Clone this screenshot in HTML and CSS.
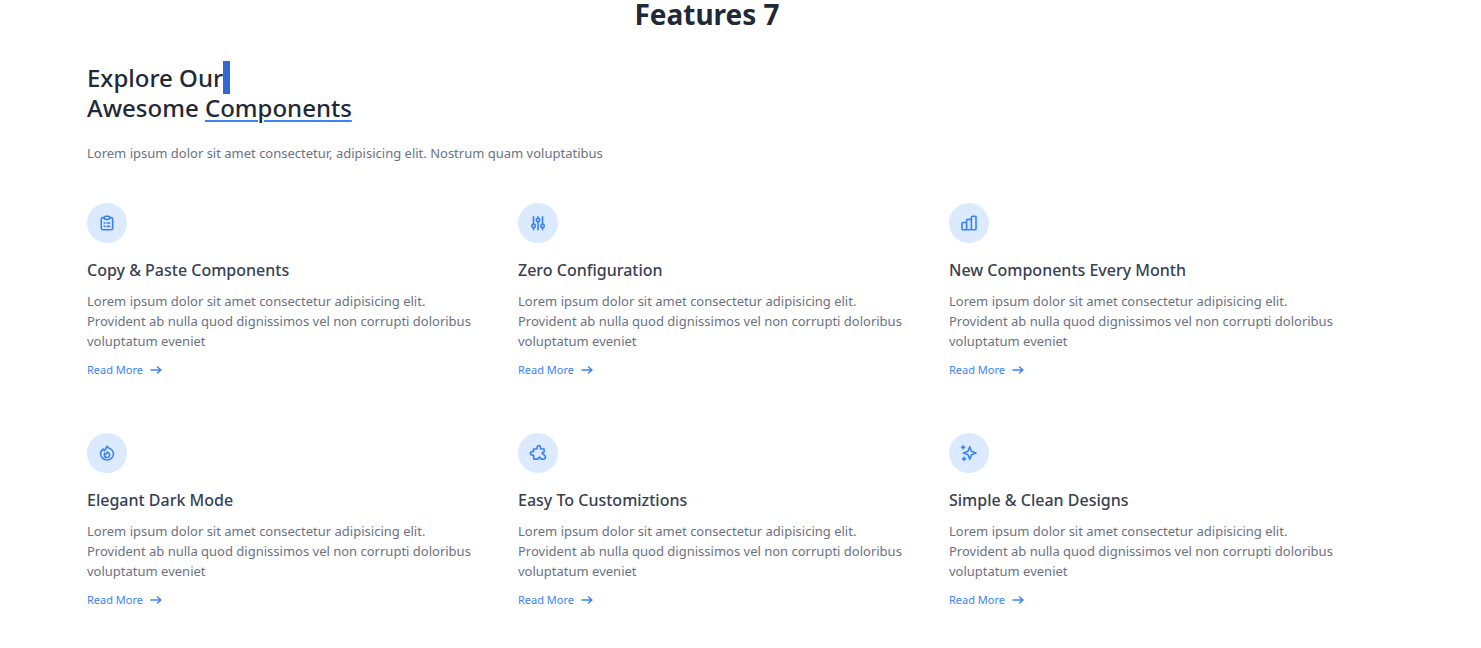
FILE: index.html
```html
<!DOCTYPE html>
<html lang="en">
<head>
<meta charset="utf-8">
<meta name="viewport" content="width=device-width, initial-scale=1">
<title>Features 7</title>
<link rel="stylesheet" href="styles.css">
</head>
<body>
<svg class="sprite" aria-hidden="true">
  <symbol id="arrow" viewBox="0 0 12 10"><path d="M1 5h10M7.500 2 11 5 7.500 8"/></symbol>
</svg>
<main class="page">
  <h1 class="page-title">Features 7</h1>
  <header class="intro">
    <h2 class="headline"><span class="first-line">Explore Our<span class="selection"></span></span><br>Awesome <span class="underlined">Components</span></h2>
    <p class="lead">Lorem ipsum dolor sit amet consectetur, adipisicing elit. Nostrum quam voluptatibus</p>
  </header>
  <section class="features">
    <article class="feature">
      <span class="badge"><svg class="icon" viewBox="0 0 20 20"><path d="M7 4H5.200A1.500 1.500 0 0 0 3.700 5.500v10.300A1.700 1.700 0 0 0 5.400 17.500h9.200a1.700 1.700 0 0 0 1.700-1.700V5.500A1.500 1.500 0 0 0 14.800 4H13"/><rect x="7" y="2.500" width="6" height="3.500" rx="1.700"/><path d="M7 10h.8M10.200 10H13M7 13.700h.8M10.200 13.700H13"/></svg></span>
      <h3 class="name">Copy &amp; Paste Components</h3>
      <p class="text">Lorem ipsum dolor sit amet consectetur adipisicing elit. Provident ab nulla quod dignissimos vel non corrupti doloribus voluptatum eveniet</p>
      <a class="more" href="#">Read More <svg class="arrow" aria-hidden="true"><use href="#arrow"/></svg></a>
    </article>
    <article class="feature">
      <span class="badge"><svg class="icon" viewBox="0 0 20 20"><path d="M5 3v8.200M5 15.200V17.500M10 3v1.500M10 8.800v8.700M15 3v8.200M15 15.200V17.500"/><circle cx="5" cy="13.200" r="1.900"/><circle cx="10" cy="6.700" r="1.900"/><circle cx="15" cy="13.200" r="1.900"/></svg></span>
      <h3 class="name">Zero Configuration</h3>
      <p class="text">Lorem ipsum dolor sit amet consectetur adipisicing elit. Provident ab nulla quod dignissimos vel non corrupti doloribus voluptatum eveniet</p>
      <a class="more" href="#">Read More <svg class="arrow" aria-hidden="true"><use href="#arrow"/></svg></a>
    </article>
    <article class="feature">
      <span class="badge"><svg class="icon" viewBox="0 0 20 20"><path d="M7.300 17.500H3.400A1.200 1.200 0 0 1 2.200 16.300V10.700A1.200 1.200 0 0 1 3.400 9.500h3.900M7.300 17.500V7.200A1.200 1.200 0 0 1 8.500 6h4.200M7.300 17.500h5.400M12.700 17.500V3.700A1.200 1.200 0 0 1 13.900 2.500h2.700A1.200 1.200 0 0 1 17.800 3.700v12.600a1.200 1.200 0 0 1-1.200 1.200z"/></svg></span>
      <h3 class="name">New Components Every Month</h3>
      <p class="text">Lorem ipsum dolor sit amet consectetur adipisicing elit. Provident ab nulla quod dignissimos vel non corrupti doloribus voluptatum eveniet</p>
      <a class="more" href="#">Read More <svg class="arrow" aria-hidden="true"><use href="#arrow"/></svg></a>
    </article>
    <article class="feature">
      <span class="badge"><svg class="icon" viewBox="0 0 20 20"><path d="M10 2.500C9.200 5 8 6 7 7.500 6.500 7 6 6.500 5.800 5.500 3.800 7 2.800 9 2.800 10.800a7.200 7 0 0 0 14.400 0C17.200 7 14 5.500 12 4.500 11.200 4 10.500 3.300 10 2.500z"/><path d="M10.300 8.800c0 1.500-.7 1.800-1.400 2.300-.5-.2-.9-.4-1.200-.8-.5.600-.7 1.200-.7 1.800a3 2.900 0 0 0 6 0c0-1.600-1.300-2.500-2.700-3.300z"/></svg></span>
      <h3 class="name">Elegant Dark Mode</h3>
      <p class="text">Lorem ipsum dolor sit amet consectetur adipisicing elit. Provident ab nulla quod dignissimos vel non corrupti doloribus voluptatum eveniet</p>
      <a class="more" href="#">Read More <svg class="arrow" aria-hidden="true"><use href="#arrow"/></svg></a>
    </article>
    <article class="feature">
      <span class="badge"><svg class="icon" viewBox="0 0 20 20"><path d="M5 5.500h3.300C9.200 5.500 9 4.600 9 3.700a1.900 1.900 0 0 1 3.800 0c0 .9-.2 1.800.7 1.800h3.300v3c0 1-2.300.6-2.300 1.800s2.300.8 2.300 1.800v.5a1.900 1.900 0 1 1-1.400 4.200h-1.900c-1 0-.3-2.200-1.800-2.200s-.8 2.200-1.800 2.200H5.200v-3.700c0-1-.7-.8-1.700-.8a1.900 1.900 0 0 1 0-3.800c.8 0 1.500.2 1.500-.6z"/></svg></span>
      <h3 class="name">Easy To Customiztions</h3>
      <p class="text">Lorem ipsum dolor sit amet consectetur adipisicing elit. Provident ab nulla quod dignissimos vel non corrupti doloribus voluptatum eveniet</p>
      <a class="more" href="#">Read More <svg class="arrow" aria-hidden="true"><use href="#arrow"/></svg></a>
    </article>
    <article class="feature">
      <span class="badge"><svg class="icon" viewBox="0 0 20 20"><path d="M3.500 2v3.400M1.800 3.700h3.400M4.500 14.800v3.400M2.800 16.500h3.400M10.800 3 12.700 8.100 17.800 10 12.700 11.900 10.800 17 8.900 11.900 3.800 10 8.900 8.100z"/></svg></span>
      <h3 class="name">Simple &amp; Clean Designs</h3>
      <p class="text">Lorem ipsum dolor sit amet consectetur adipisicing elit. Provident ab nulla quod dignissimos vel non corrupti doloribus voluptatum eveniet</p>
      <a class="more" href="#">Read More <svg class="arrow" aria-hidden="true"><use href="#arrow"/></svg></a>
    </article>
  </section>
</main>
</body>
</html>
```
FILE: styles.css
```css
* { box-sizing: border-box; }
body { margin: 0; background: #fff; color: #1f2937; font-family: "Segoe UI", "Noto Sans", sans-serif; }
h1, h2, h3, p { margin: 0; }
.sprite { display: none; }
.page { padding: 0 146px 0 87px; }
.page-title { padding-right: 8px; font-size: 28px; line-height: 28px; font-weight: 700; text-align: center; }
.intro { padding-top: 35px; }
.headline { font-size: 24px; line-height: 30px; font-weight: 500; }
.first-line { position: relative; }
.selection { position: absolute; left: 100%; top: 0; width: 7px; height: 33px; background: #3367d1; }
.underlined { text-decoration: underline #3b82f6 2px; text-underline-offset: 3px; }
.lead { margin-top: 20px; font-size: 13px; line-height: 20px; color: #6b7280; }
.features { display: grid; grid-template-columns: repeat(3, minmax(0, 1fr)); gap: 53px 45px; padding: 40px 0 36px; }
.badge { display: flex; align-items: center; justify-content: center; width: 40px; height: 40px; border-radius: 50%; background: #dbeafe; }
.icon { width: 18px; height: 18px; }
.icon, .arrow { fill: none; stroke: #3b82f6; stroke-width: 1.8; stroke-linecap: round; stroke-linejoin: round; }
.name { margin-top: 14px; font-size: 16px; line-height: 26px; font-weight: 500; color: #374151; }
.text { margin-top: 8px; font-size: 13px; line-height: 20px; color: #6b7280; }
.more { display: flex; width: max-content; align-items: center; gap: 7px; margin-top: 9px; font-size: 11px; line-height: 20px; color: #3b82f6; text-decoration: none; }
.arrow { width: 12px; height: 10px; stroke-width: 1.4; }
```
